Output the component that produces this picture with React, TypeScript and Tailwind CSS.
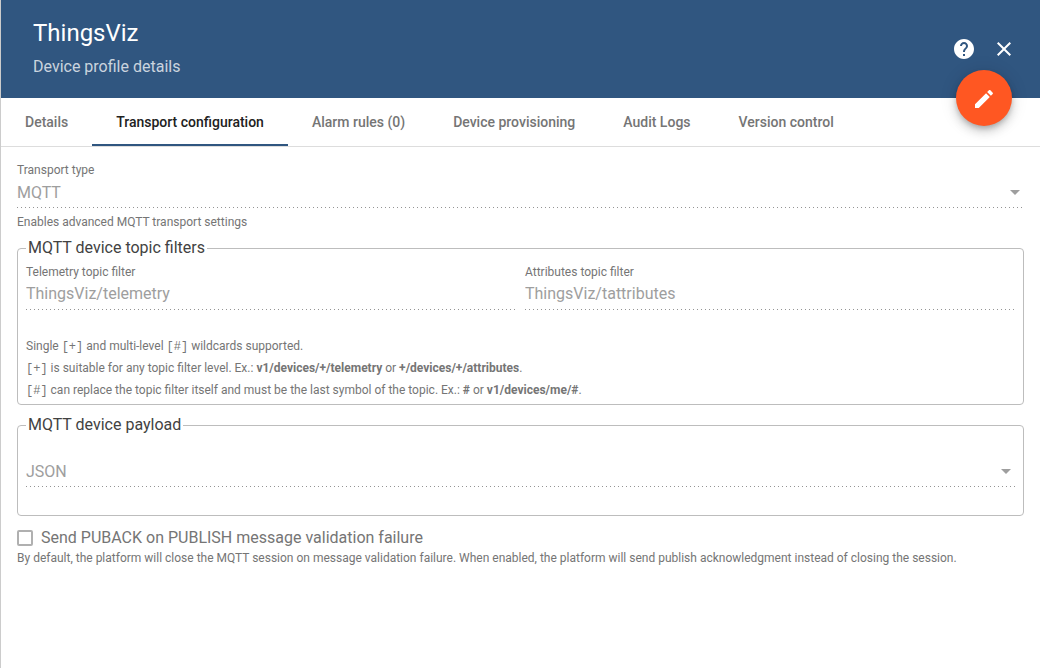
import { useId, type ReactNode } from "react";

const tabs = [
  "Details",
  "Transport configuration",
  "Alarm rules (0)",
  "Device provisioning",
  "Audit Logs",
  "Version control",
];

function DottedLine() {
  return (
    <div className="h-px bg-[linear-gradient(to_right,rgba(0,0,0,0.42)_0%,rgba(0,0,0,0.42)_33%,transparent_0%)] bg-[length:4px_100%] bg-repeat-x" />
  );
}

function SelectField({ label, value, hideLabel }: { label: string; value: string; hideLabel?: boolean }) {
  const id = useId();
  return (
    <div>
      {!hideLabel && (
        <label htmlFor={id} className="block text-xs leading-4 text-[#757575]">
          {label}
        </label>
      )}
      <div className="flex items-center pt-[3px] pb-0.5">
        <select
          id={id}
          aria-label={hideLabel ? label : undefined}
          disabled
          defaultValue={value}
          className="h-6 min-w-0 flex-1 appearance-none bg-transparent text-base leading-6 text-[#9e9e9e] opacity-100"
        >
          <option>{value}</option>
        </select>
        <svg viewBox="0 0 10 5" className="mr-1 mb-px h-[5px] w-[10px] fill-[#9e9e9e]" aria-hidden="true">
          <path d="M0 0h10L5 5z" />
        </svg>
      </div>
      <DottedLine />
    </div>
  );
}

function TextField({ label, value }: { label: string; value: string }) {
  const id = useId();
  return (
    <div className="min-w-0 flex-1">
      <label htmlFor={id} className="block text-xs leading-4 text-[#757575]">
        {label}
      </label>
      <div className="pt-0.5 pb-[3px]">
        <input
          id={id}
          type="text"
          disabled
          defaultValue={value}
          className="block h-6 w-full bg-transparent text-base leading-6 text-[#9e9e9e]"
        />
      </div>
      <DottedLine />
    </div>
  );
}

function Group({ title, children }: { title: string; children: ReactNode }) {
  return (
    <fieldset className="mt-2.5 min-w-0 rounded border border-[#bdbdbd] px-2">
      <legend className="px-0.5 text-base leading-5 text-[#424242]">{title}</legend>
      {children}
    </fieldset>
  );
}

function Code({ children }: { children: ReactNode }) {
  return <code className="font-['Liberation_Mono',monospace] text-xs">{children}</code>;
}

export default function App() {
  return (
    <div className="min-h-screen border-l border-[#cccccc] bg-white font-[Roboto,sans-serif] text-[#757575]">
      <header className="relative flex items-center justify-between bg-[#305680] py-4 pr-6 pl-8 text-white">
        <div className="py-px">
          <h1 className="text-2xl leading-8">ThingsViz</h1>
          <p className="pt-1 text-base leading-7 text-white/75">Device profile details</p>
        </div>
        <div className="flex items-center gap-4">
          <button type="button" aria-label="Help" className="size-6">
            <svg viewBox="0 0 24 24" className="size-6 fill-white">
              <path d="M12 2C6.48 2 2 6.48 2 12s4.48 10 10 10 10-4.48 10-10S17.52 2 12 2zm1 17h-2v-2h2v2zm2.07-7.75l-.9.92C13.45 12.9 13 13.5 13 15h-2v-.5c0-1.1.45-2.1 1.17-2.83l1.24-1.26c.37-.36.59-.86.59-1.41 0-1.1-.9-2-2-2s-2 .9-2 2H8c0-2.21 1.79-4 4-4s4 1.79 4 4c0 .88-.36 1.68-.93 2.25z" />
            </svg>
          </button>
          <button type="button" aria-label="Close" className="size-6">
            <svg viewBox="0 0 24 24" className="size-6 fill-white">
              <path d="M19 6.41L17.59 5 12 10.59 6.41 5 5 6.41 10.59 12 5 17.59 6.41 19 12 13.41 17.59 19 19 17.59 13.41 12z" />
            </svg>
          </button>
        </div>
        <button
          type="button"
          aria-label="Edit"
          className="absolute right-7 -bottom-7 flex size-14 items-center justify-center rounded-full bg-[#ff5722] shadow-[0_3px_5px_-1px_rgba(0,0,0,0.2),0_6px_10px_0_rgba(0,0,0,0.14),0_1px_18px_0_rgba(0,0,0,0.12)]"
        >
          <svg viewBox="0 0 24 24" className="size-6 fill-white">
            <path d="M3 18.25V22h3.75L17.81 10.94l-3.75-3.75L3 18.25zM20.71 8.04c.39-.39.39-1.02 0-1.41l-2.34-2.34c-.39-.39-1.02-.39-1.41 0l-1.83 1.83 3.75 3.75 1.83-1.83z" />
          </svg>
        </button>
      </header>

      <nav role="tablist" className="flex border-b border-[#dddddd]">
        {tabs.map((tab) => {
          const active = tab === "Transport configuration";
          return (
            <button
              key={tab}
              type="button"
              role="tab"
              aria-selected={active}
              className={
                active
                  ? "h-12 border-b-2 border-[#305680] px-6 pt-0.5 text-sm font-medium whitespace-nowrap text-[#212121]"
                  : "h-12 px-6 text-sm font-medium whitespace-nowrap text-[#757575]"
              }
            >
              {tab}
            </button>
          );
        })}
      </nav>

      <main className="px-4 pt-[15px]">
        <SelectField label="Transport type" value="MQTT" />
        <p className="pt-2 text-xs leading-3">Enables advanced MQTT transport settings</p>

        <Group title="MQTT device topic filters">
          <div className="flex gap-[9px] pt-1.5">
            <TextField label="Telemetry topic filter" value="ThingsViz/telemetry" />
            <TextField label="Attributes topic filter" value="ThingsViz/tattributes" />
          </div>
          <div className="pt-[25px] pb-[3px] text-xs leading-[22px]">
            <p>
              Single <Code>[+]</Code> and multi-level <Code>[#]</Code> wildcards supported.
            </p>
            <p>
              <Code>[+]</Code> is suitable for any topic filter level. Ex.: <b>v1/devices/+/telemetry</b> or{" "}
              <b>+/devices/+/attributes</b>.
            </p>
            <p>
              <Code>[#]</Code> can replace the topic filter itself and must be the last symbol of the topic. Ex.:{" "}
              <b>#</b> or <b>v1/devices/me/#</b>.
            </p>
          </div>
        </Group>

        <Group title="MQTT device payload">
          <div className="pt-[22px] pb-7">
            <SelectField label="Payload type" value="JSON" hideLabel />
          </div>
        </Group>

        <label className="mt-2.5 flex items-center gap-2 text-base leading-6">
          <input
            type="checkbox"
            disabled
            className="size-4 appearance-none rounded-xs border-2 border-[#b0b0b0] bg-white"
          />
          Send PUBACK on PUBLISH message validation failure
        </label>
        <p className="pb-4 text-xs leading-4">
          By default, the platform will close the MQTT session on message validation failure. When enabled, the
          platform will send publish acknowledgment instead of closing the session.
        </p>
      </main>
    </div>
  );
}
